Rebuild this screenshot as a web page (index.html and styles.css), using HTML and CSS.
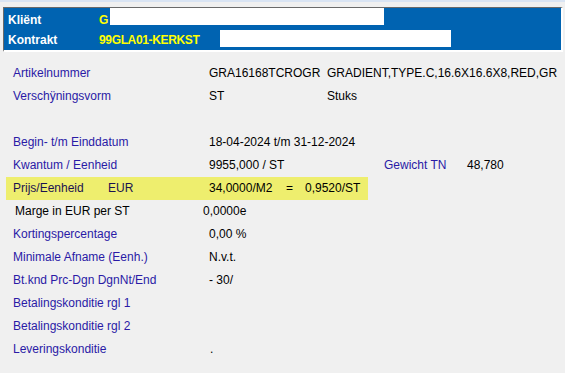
FILE: index.html
```html
<!DOCTYPE html>
<html>
<head>
  <meta charset="UTF-8">
  <title>Contractregel</title>
  <link rel="stylesheet" href="styles.css">
</head>
<body>
  <div class="topband"></div>

  <div class="panel">
    <div class="prow">
      <span class="plabel">Kliënt</span>
      <span class="pvalue">G</span>
      <span class="mask mask-client"></span>
    </div>
    <div class="prow">
      <span class="plabel">Kontrakt</span>
      <span class="pvalue">99GLA01-KERKST</span>
      <span class="mask mask-contract"></span>
    </div>
  </div>

  <div class="details">
    <div class="row">
      <span class="label">Artikelnummer</span>
      <span class="val w-code">GRA16168TCROGR</span>
      <span class="val">GRADIENT,TYPE.C,16.6X16.6X8,RED,GR</span>
    </div>
    <div class="row">
      <span class="label">Verschÿningsvorm</span>
      <span class="val w-code">ST</span>
      <span class="val">Stuks</span>
    </div>
    <div class="row"></div>
    <div class="row">
      <span class="label">Begin- t/m Einddatum</span>
      <span class="val">18-04-2024 t/m 31-12-2024</span>
    </div>
    <div class="row">
      <span class="label">Kwantum / Eenheid</span>
      <span class="val w-qty">9955,000 / ST</span>
      <span class="label w-weight">Gewicht TN</span>
      <span class="val">48,780</span>
    </div>
    <div class="row price">
      <span class="w-plabel">Prijs/Eenheid</span>
      <span class="w-cur">EUR</span>
      <span class="val w-m2">34,0000/M2</span>
      <span class="val w-eq">=</span>
      <span class="val">0,9520/ST</span>
    </div>
    <div class="row margin">
      <span class="val w-mlabel">Marge in EUR per ST</span>
      <span class="val">0,0000e</span>
    </div>
    <div class="row">
      <span class="label">Kortingspercentage</span>
      <span class="val">0,00 %</span>
    </div>
    <div class="row">
      <span class="label">Minimale Afname (Eenh.)</span>
      <span class="val">N.v.t.</span>
    </div>
    <div class="row">
      <span class="label">Bt.knd Prc-Dgn DgnNt/End</span>
      <span class="val">- 30/</span>
    </div>
    <div class="row">
      <span class="label">Betalingskonditie rgl 1</span>
    </div>
    <div class="row">
      <span class="label">Betalingskonditie rgl 2</span>
    </div>
    <div class="row">
      <span class="label">Leveringskonditie</span>
      <span class="val dot">.</span>
    </div>
  </div>
</body>
</html>
```

FILE: styles.css
```css
body {
  margin: 0;
  background: #f0f0f0;
  font-family: "Liberation Sans", Arial, sans-serif;
  font-size: 12px;
  color: #000;
}
.topband { height: 2px; background: #d9e4f3; }

.panel {
  margin: 5px 2px 0 3px;
  background: #0063b1;
  border-top: 1px solid #6a6a6a;
  border-left: 1px solid #6a6a6a;
  border-right: 2px solid #fff;
  border-bottom: 2px solid #fff;
  padding: 2px 0 0 4px;
  height: 40px;
}
.prow {
  position: relative;
  display: flex;
  height: 20px;
  line-height: 20px;
  font-weight: bold;
}
.plabel { width: 91px; color: #fff; }
.pvalue { color: #ffff00; letter-spacing: -0.35px; }
.mask { position: absolute; background: #fff; height: 17px; }
.mask-client { left: 102px; top: -2px; width: 274px; }
.mask-contract { left: 212px; top: 0; width: 231px; }

.details { padding: 10px 0 0 13px; }
.row {
  display: flex;
  height: 23px;
  line-height: 23px;
  white-space: nowrap;
}
.label { width: 196px; color: #2a1aa6; }
.val { color: #000; }
.w-code { width: 118px; }
.w-qty { width: 175px; }
.w-weight { width: 83px; }

.price {
  background: #eeee6e;
  margin-left: -7px;
  padding-left: 7px;
  width: 355px;
  color: #1c1250;
}
.w-plabel { width: 95px; }
.w-cur { width: 101px; }
.w-m2 { width: 77px; }
.w-eq { width: 19px; }

.margin { padding-left: 2px; }
.w-mlabel { width: 188px; }
.dot { padding-left: 1px; }
```
